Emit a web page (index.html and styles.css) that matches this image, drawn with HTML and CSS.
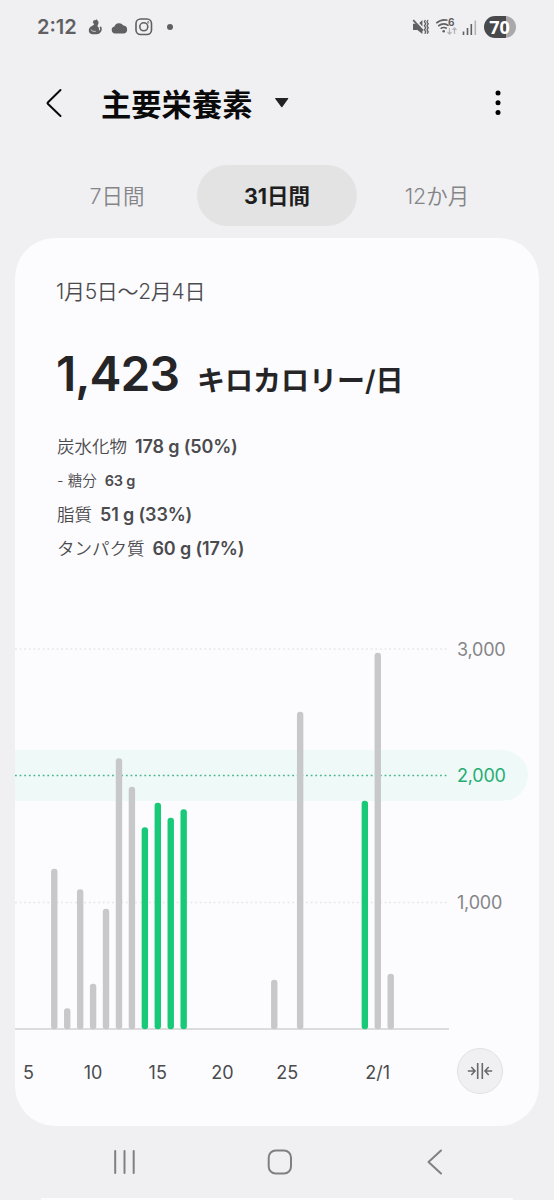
FILE: index.html
```html
<!DOCTYPE html>
<html lang="ja">
<head>
    <meta charset="UTF-8">
    <meta name="viewport" content="width=device-width, initial-scale=1.0">
    <title>主要栄養素</title>
    <link rel="stylesheet" href="styles.css">
</head>
<body>
    <div class="status-bar">
        <span class="clock">2:12</span>
        <svg width="15" height="16" viewBox="0 0 15 16" fill="#606062">
            <path d="M4.800 3.200L6 .8l1 .6L8.500.3l1.700 1.900c.7 1.400.2 2.800-.5 3.700l-.2 1.400c1.600 1.200 2 2.900 1.300 4.700 1.200-.6 1.500-1.700 1.200-2.900l-.5-1.100 1.700-.6c1.600 3-.3 7.800-4.400 7.800H4.200C1.700 15.200.6 13.200.8 11.100c.2-1.900 1.200-3.300 2.800-3.900L6.200 5.600z"/>
            <path d="M2.800 10.800Q4.800 13.200 7.800 12.300" stroke="#f0f0f2" stroke-width=".7" fill="none"/>
        </svg>
        <svg class="icon-cloud" width="17" height="12" viewBox="0 0 17 12" fill="#606062">
            <path d="M4 11.500A3.500 3.500 0 0 1 3.400 4.600 4.900 4.900 0 0 1 12.300 3.600 4 4 0 0 1 13 11.500z"/>
        </svg>
        <svg class="icon-insta" width="18" height="18" viewBox="0 0 18 18" fill="none" stroke="#606062" stroke-width="1.600">
            <rect x="1" y="1" width="15.500" height="15.500" rx="4.500"/>
            <circle cx="8.800" cy="8.800" r="4"/>
            <circle cx="13.200" cy="4.400" r=".3"/>
        </svg>
        <span class="dot"></span>
        <div class="status-right">
            <svg width="17" height="16" viewBox="0 0 17 16">
                <path d="M1 4.700h3l6.400 6.600v3.700L5.400 10.900H1zM10.400 1v6.400L7.300 4z" fill="#606062"/>
                <path d="M1.200 1.200l9.800 10.500" stroke="#606062" stroke-width="1.700"/>
                <path d="M13.400 1l-1 1.800 1.400 2-1.400 2 1.400 2-1.400 2 1.400 2-1 2M16 1l-1 1.800 1.200 2-1.200 2 1.200 2-1.200 2 1.200 2-1 2" fill="none" stroke="#606062" stroke-width="1.300"/>
            </svg>
            <div class="wifi">
                <svg width="24" height="18" viewBox="0 0 24 18">
                    <path d="M1.300 5.200Q6.500.7 12.500 2.300M3.300 8Q8.500 4 13.700 7.600M5.600 10.600Q8.700 8.500 11.800 10.500" fill="none" stroke="#606062" stroke-width="1.600"/>
                    <circle cx="8.700" cy="13.200" r="1.300" fill="#606062"/>
                    <path d="M14.500 10v6M12.500 14l2 2.200 2-2.200M19.500 16V10M17.500 12l2-2.200 2 2.200" fill="none" stroke="#b4b4b6" stroke-width="1.200"/>
                </svg>
                <span class="wifi-gen">6</span>
            </div>
            <svg class="icon-signal" width="15" height="15" viewBox="0 0 15 15">
                <path d="M1.500 11.500V15M5.500 8V15M9.300 4V15" stroke="#606062" stroke-width="1.600"/>
                <path d="M13.300.5V15" stroke="#b4b4b6" stroke-width="1.600"/>
            </svg>
            <div class="battery">70</div>
        </div>
    </div>

    <header class="app-bar">
        <svg width="18" height="30" viewBox="0 0 18 30" fill="none" stroke="#0a0a0a" stroke-width="2" stroke-linecap="round" stroke-linejoin="round">
            <path d="M14.500 2L1.800 14.500q-.6.600 0 1.200L14.500 28"/>
        </svg>
        <h1>主要栄養素</h1>
        <svg class="caret" width="16" height="12" viewBox="0 0 16 12" fill="#222">
            <path d="M1.500 1h12.400q.8 0 .3.700L8.300 10q-.5.700-1 0L1.200 1.700q-.5-.7.300-.7z"/>
        </svg>
        <svg class="more" width="6" height="26" viewBox="0 0 6 26">
            <circle cx="3" cy="3" r="2.500"/>
            <circle cx="3" cy="12.700" r="2.500"/>
            <circle cx="3" cy="22.400" r="2.500"/>
        </svg>
    </header>

    <nav class="tabs">
        <div class="tab">7日間</div>
        <div class="tab active">31日間</div>
        <div class="tab">12か月</div>
    </nav>

    <main class="card">
        <div class="period">1月5日～2月4日</div>
        <div class="total"><span class="value">1,423</span><span class="unit">キロカロリー/日</span></div>
        <div class="nutrients">
            <div class="nutrient"><span>炭水化物</span><b>178 g (50%)</b></div>
            <div class="nutrient sub"><span>- 糖分</span><b>63 g</b></div>
            <div class="nutrient"><span>脂質</span><b>51 g (33%)</b></div>
            <div class="nutrient"><span>タンパク質</span><b>60 g (17%)</b></div>
        </div>

        <div class="chart">
            <div class="band"></div>
            <svg class="plot" width="434" height="390">
                <path class="line" d="M0 9H432M0 262.500H432"/>
                <path class="line goal" d="M0 135.500H432"/>
                <path class="base" d="M0 389H434"/>
                <g id="bars"></g>
            </svg>
            <div class="scale">
                <span>3,000</span>
                <span class="goal-text">2,000</span>
                <span>1,000</span>
            </div>
        </div>

        <div class="axis">
            <div class="dates" id="dates"></div>
            <div class="shrink">
                <svg width="26" height="18" viewBox="0 0 26 18" fill="none" stroke="#69696b" stroke-width="1.600">
                    <path d="M10.700 1v16M15.300 1v16M.8 9h7M4.300 5L8 9l-3.700 4M25.200 9h-7M21.700 5L18 9l3.700 4"/>
                </svg>
            </div>
        </div>
    </main>

    <footer class="nav-bar">
        <svg width="24" height="26" viewBox="0 0 24 26" fill="none" stroke="#808083" stroke-width="2" stroke-linecap="round">
            <path d="M2.200 2v22M11.500 2v22M20.700 2v22"/>
        </svg>
        <svg class="home" width="26" height="26" viewBox="0 0 26 26" fill="none" stroke="#808083" stroke-width="2">
            <rect x="1.700" y="1.500" width="22.300" height="23" rx="7"/>
        </svg>
        <svg class="back" width="18" height="26" viewBox="0 0 18 26" fill="none" stroke="#808083" stroke-width="2" stroke-linecap="round" stroke-linejoin="round">
            <path d="M15 1.500L2.500 13 15 24.500"/>
        </svg>
    </footer>
    <div class="next-card"></div>

    <script src="chart.js"></script>
</body>
</html>
```
FILE: styles.css
```css
* {
    box-sizing: border-box;
}
body {
    margin: 0;
    width: 554px;
    height: 1200px;
    overflow: hidden;
    background-color: #f0f0f2;
    font-family: Inter, "Noto Sans CJK JP", sans-serif;
    color: #4b4b4e;
}
svg {
    display: block;
    flex: none;
}
.status-bar {
    display: flex;
    align-items: center;
    height: 54px;
    padding: 0 38px 0 37px;
}
.clock {
    width: 51px;
    font-size: 20px;
    font-weight: 600;
    color: #606062;
}
.icon-cloud {
    margin: 2px 0 0 8px;
}
.icon-insta {
    margin-left: 7px;
}
.dot {
    width: 6px;
    height: 6px;
    margin-left: 14px;
    border-radius: 50%;
    background-color: #606062;
}
.status-right {
    display: flex;
    align-items: center;
    margin-left: auto;
}
.wifi {
    position: relative;
    margin-left: 6px;
}
.wifi-gen {
    position: absolute;
    left: 13px;
    top: -3px;
    font-size: 10px;
    line-height: 14px;
    font-weight: 700;
    color: #606062;
}
.icon-signal {
    margin-left: 3px;
}
.battery {
    width: 32px;
    height: 22px;
    margin-left: 7px;
    padding-right: 1px;
    border-radius: 11px;
    background: linear-gradient(to right, #49494b 70%, #a9a9ab 70%);
    color: #fff;
    font: 700 18px/22px "Open Sans", sans-serif;
    text-align: center;
}
.app-bar {
    display: flex;
    align-items: center;
    height: 98px;
    padding: 0 53px 0 46px;
}
.app-bar h1 {
    width: 152px;
    margin: 3px 0 0 37px;
    font-size: 30.300px;
    line-height: 40px;
    font-weight: 700;
    color: #0a0a0a;
    white-space: nowrap;
}
.caret {
    margin-left: 21px;
}
.more {
    margin-left: auto;
}
.tabs {
    display: flex;
    height: 61px;
    margin: 13px 37px 0;
}
.tab {
    width: 160px;
    padding-top: 1px;
    border-radius: 31px;
    font-size: 21.500px;
    line-height: 60px;
    font-weight: 350;
    text-align: center;
    color: #858588;
}
.tab.active {
    background-color: #e3e3e4;
    font-weight: 700;
    color: #1e1e20;
}
.card {
    height: 888px;
    margin: 12px 15px 0;
    border-radius: 40px;
    background-color: #fcfcfe;
}
.period {
    padding: 38px 0 0 41px;
    font-size: 21px;
    line-height: 32px;
    font-weight: 350;
    letter-spacing: -0.300px;
}
.total {
    display: flex;
    align-items: baseline;
    height: 76px;
    margin: 28px 0 0 41px;
    line-height: 76px;
    font-weight: 600;
    color: #252528;
}
.value {
    width: 141px;
    font-size: 48px;
    letter-spacing: -1px;
}
.unit {
    font-size: 28px;
}
.nutrients {
    margin: 18px 0 0 42px;
}
.nutrient {
    display: flex;
    align-items: baseline;
    gap: 8px;
    height: 34.100px;
    font-size: 17.500px;
    line-height: 34px;
    font-weight: 350;
}
.nutrient b {
    font-size: 18px;
    font-weight: 600;
    letter-spacing: -0.150px;
}
.nutrient.sub, .nutrient.sub b {
    font-size: 14.500px;
}
.chart {
    display: grid;
    grid-template-columns: 434px 1fr;
    grid-template-rows: 390px;
    margin-top: 73.400px;
}
.band {
    grid-area: 1 / 1 / 2 / 3;
    height: 51px;
    margin: 110px 11px 0 0;
    border-radius: 0 26px 26px 0;
    background-color: #effaf8;
}
.plot {
    grid-area: 1 / 1;
}
.line {
    stroke: #e6e6e9;
    stroke-width: 1.500;
    stroke-dasharray: 1.800 2.820;
    fill: none;
}
.line.goal {
    stroke: #4bb58c;
}
.base {
    stroke: #dcdcdf;
    stroke-width: 2;
}
.bar {
    fill: #c8c8ca;
}
.bar.good {
    fill: #18ca78;
}
.scale {
    grid-area: 1 / 2;
    display: flex;
    flex-direction: column;
    gap: 102.700px;
    padding-left: 8px;
    margin-top: -2px;
    font-size: 18px;
    line-height: 24px;
    letter-spacing: -0.200px;
    color: #858588;
}
.goal-text {
    color: #24ad73;
}
.axis {
    display: flex;
    height: 84px;
}
.dates {
    display: flex;
    align-items: center;
    width: 442px;
    padding: 2px 0 0 6.900px;
    font-size: 18px;
}
.date {
    display: flex;
    justify-content: center;
    flex: none;
    width: 12.940px;
    white-space: nowrap;
}
.shrink {
    display: flex;
    align-items: center;
    justify-content: center;
    width: 46px;
    height: 46px;
    margin-top: 18px;
    border: 1px solid #e1e1e3;
    border-radius: 50%;
    background-color: #f0f0f2;
}
.nav-bar {
    display: flex;
    align-items: center;
    height: 72px;
    padding-left: 113px;
}
.home {
    margin-left: 130px;
}
.back {
    margin-left: 133px;
}
.next-card {
    height: 2px;
    margin: 0 41px;
    background-color: #fcfcfe;
}
```
FILE: chart.js
```js
// kcal per day, starting on January 5
const goal = 2000;
const days = [0, 0, 1268, 166, 1105, 359, 951, 2139, 1914, 1595, 1788, 1670, 1737,
    0, 0, 0, 0, 0, 0, 391, 0, 2507, 0, 0, 0, 0, 1804, 2972, 438, 0, 0];
const labels = {0: '5', 5: '10', 10: '15', 15: '20', 20: '25', 27: '2/1'};

const bars = document.getElementById('bars');
const dates = document.getElementById('dates');

days.forEach((kcal, i) => {
    if (kcal > 0) {
        const bar = document.createElementNS('http://www.w3.org/2000/svg', 'rect');
        const good = kcal > goal * 0.75 && kcal < goal * 0.95;
        const height = kcal * 0.1267;
        bar.setAttribute('class', good ? 'bar good' : 'bar');
        bar.setAttribute('x', 10.2 + i * 12.94);
        bar.setAttribute('y', 389.3 - height);
        bar.setAttribute('width', 6.4);
        bar.setAttribute('height', height);
        bar.setAttribute('rx', 3);
        bars.appendChild(bar);
    }

    const date = document.createElement('div');
    date.className = 'date';
    date.innerText = labels[i] || '';
    dates.appendChild(date);
});
```
